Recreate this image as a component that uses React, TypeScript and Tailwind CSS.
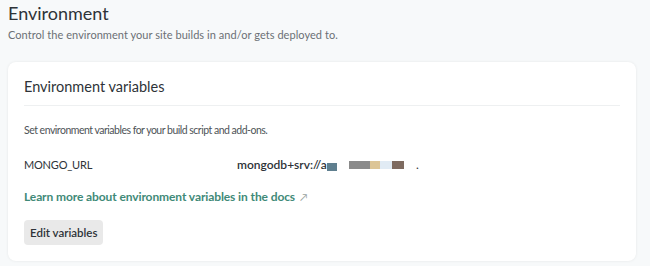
export default function App() {
  return (
    <div className="w-[650px] h-[266px] bg-[#f7f9fa] overflow-hidden" style={{ fontFamily: 'Lato, sans-serif' }}>
      <div className="px-[8px] pt-[2px]">
        <h1 className="text-[18px] leading-[22px] text-[#2e3338] font-normal">Environment</h1>
        <p className="text-[11px] leading-[16px] text-[#6b7075] mt-[3px] tracking-[0.05px]">Control the environment your site builds in and/or gets deployed to.</p>
        <div className="mt-[19px] w-[628px] bg-white rounded-[8px] shadow-[0_0_3px_rgba(0,0,0,0.08)] px-[16px] pb-[16px]">
          <div className="pt-[15px] pb-[8px] border-b border-[#eef0f1]">
            <h2 className="text-[14.5px] leading-[20px] text-[#2e3338] font-normal">Environment variables</h2>
          </div>
          <p className="mt-[16px] text-[10.5px] leading-[16px] tracking-[-0.5px] text-[#4e5357]">Set environment variables for your build script and add-ons.</p>
          <div className="mt-[19px] flex items-center text-[12px] leading-[16px]">
            <div className="w-[213px] text-[11px] tracking-[-0.2px] text-[#2e3338]">MONGO_URL</div>
            <div className="flex items-center text-[#2e3338] font-semibold">
              <span>mongodb+srv://a</span>
              <span className="w-[10px] h-[8px] bg-[#5f7f8f] mt-[4px]"></span>
              <span className="w-[12px]"></span>
              <span className="w-[21px] h-[8px] bg-[#8a8a8a]"></span>
              <span className="w-[10px] h-[8px] bg-[#dcc597]"></span>
              <span className="w-[12px] h-[8px] bg-[#e1ebf4]"></span>
              <span className="w-[12px] h-[8px] bg-[#7e6b60]"></span>
              <span className="ml-[12px] font-normal">.</span>
            </div>
          </div>
          <div className="mt-[16px] flex items-center gap-[5px] text-[12px] leading-[16px]">
            <a className="font-bold text-[#3f8a78] tracking-[-0.1px]">Learn more about environment variables in the docs</a>
            <span className="text-[10px] text-[#9aa3a0]">↗</span>
          </div>
          <button className="mt-[15px] h-[25px] px-[6px] rounded-[4px] bg-[#e9e9e9] text-[11.5px] font-semibold text-[#2e3338]">Edit variables</button>
        </div>
      </div>
    </div>
  );
}
